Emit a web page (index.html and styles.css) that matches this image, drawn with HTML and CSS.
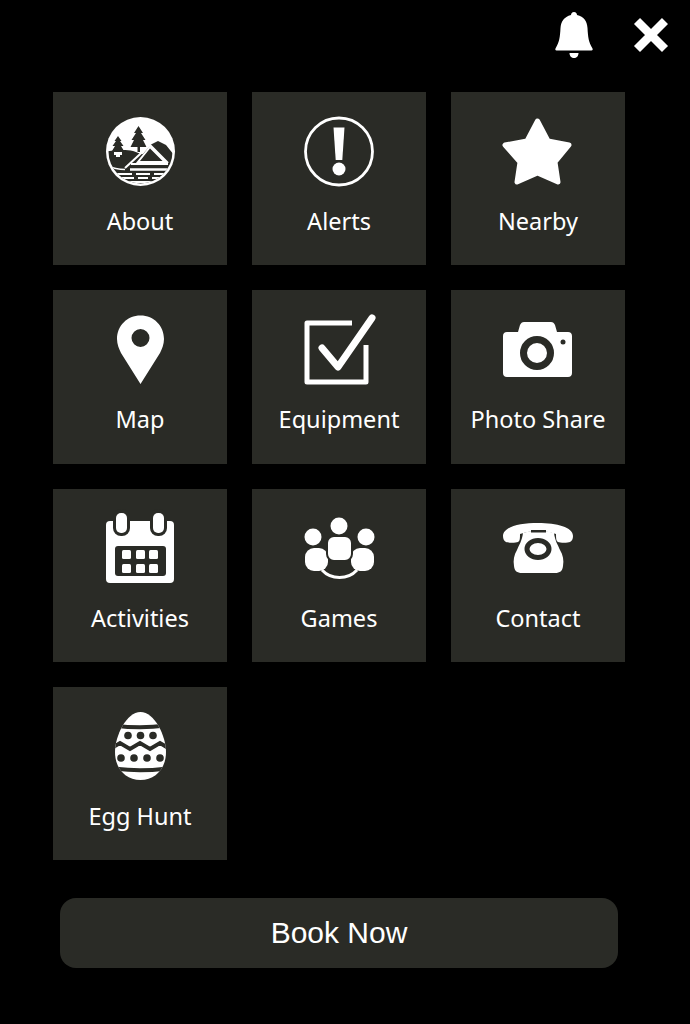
FILE: index.html
```html
<!DOCTYPE html>
<html>
<head>
    <title>Menu</title>
    <meta name="viewport" content="width=device-width, initial-scale=1.0">
    <link rel="stylesheet" href="styles.css">
</head>
<body>
    <div id="topbar">
      <svg class="bell-icon" viewBox="0 0 40 48">
        <path d="M20 1c2 0 3 1.500 3 3 7 1.500 10 6 10.500 13 .5 9 1 14 5 20.500.5 1 0 2-1 2H2.500c-1 0-1.500-1-1-2 4-6.500 4.500-11.500 5-20.500C7 10.500 10 6 17 4c0-1.500 1-3 3-3z" fill="#fff"/>
        <path d="M15.500 42h9c0 3-2 5-4.500 5s-4.500-2-4.500-5z" fill="#fff"/>
      </svg>
      <svg class="close-icon" viewBox="0 0 38 38">
        <path d="M5 5l28 28M33 5L5 33" stroke="#fff" stroke-width="8.500" fill="none"/>
      </svg>
    </div>

    <div id="menu">
      <a class="tile">
        <svg class="icon" viewBox="0 0 80 80">
          <clipPath id="inside"><circle cx="40.500" cy="41.500" r="32"/></clipPath>
          <circle cx="40.500" cy="41.500" r="34.500" fill="#fff"/>
          <g clip-path="url(#inside)">
            <path d="M5 42c8-2 20-3 28-1 4 1 7 3 10 3l7-9 8-4 8 4 8 10v32H5z" fill="#2a2b26"/>
            <path d="M18 26l3.500 5H20l3.500 5H21l3 5H12l3-5h-2.500l3.500-5h-1.500z" fill="#2a2b26"/>
            <path d="M38.500 16l4.500 7h-2l4.500 7H43l3.500 7h-16l3.500-7h-2.500l4.500-7h-2z" fill="#2a2b26"/>
            <rect x="37.500" y="37" width="2.500" height="5" fill="#2a2b26"/>
            <path d="M14 42h8v3h-2v2h-4v-2h-2z" fill="#fff"/>
            <path d="M25 58l25-23 18 18" fill="none" stroke="#fff" stroke-width="2"/>
            <path d="M50 37L38 52h27z" fill="#2a2b26" stroke="#fff" stroke-width="2"/>
            <path d="M31 54h37" stroke="#fff" stroke-width="2"/>
            <path d="M30 59.500h38" stroke="#fff" stroke-width="2.500"/>
            <path d="M8 56c6 3 12 3.500 17 3.500" fill="none" stroke="#fff" stroke-width="1.500"/>
            <path d="M14 64h18M36 64h14M54 64h16M20 68h14M38 68h10M52 68h12M26 72h28" stroke="#fff" stroke-width="1.800"/>
          </g>
        </svg>
        <span class="label">About</span>
      </a>
      <a class="tile">
        <svg class="icon" viewBox="0 0 80 80">
          <circle cx="40" cy="41.500" r="33.500" fill="none" stroke="#fff" stroke-width="2.800"/>
          <path d="M34.500 17.500h11L43.300 50h-6.600z" fill="#fff"/>
          <circle cx="40" cy="59" r="6.500" fill="#fff"/>
        </svg>
        <span class="label">Alerts</span>
      </a>
      <a class="tile">
        <svg class="icon" viewBox="0 0 80 80">
          <path d="M39.500 11L50 31l21 4-14 17 3 20-20.500-9L19 72l3-20L7 35l22-4z" fill="#fff" stroke="#fff" stroke-width="5" stroke-linejoin="round"/>
        </svg>
        <span class="label">Nearby</span>
      </a>

      <a class="tile">
        <svg class="icon" viewBox="0 0 80 80">
          <path fill-rule="evenodd" d="M40.500 7.500C54 7.500 64 18 64 31c0 5-2 10-4 14L40.500 76 21 45c-2-4-4-9-4-14C17 18 27 7.500 40.500 7.500zm0 13.500a9 9 0 1 0 0 18 9 9 0 0 0 0-18z" fill="#fff"/>
        </svg>
        <span class="label">Map</span>
      </a>
      <a class="tile">
        <svg class="icon" viewBox="0 0 80 80">
          <path d="M53 15H8v59h59V37" fill="none" stroke="#fff" stroke-width="5" stroke-linejoin="round"/>
          <path d="M23 40l16 19L73 10" fill="none" stroke="#fff" stroke-width="7" stroke-linecap="round" stroke-linejoin="round"/>
        </svg>
        <span class="label">Equipment</span>
      </a>
      <a class="tile">
        <svg class="icon" viewBox="0 0 80 80">
          <path d="M26 14h27c2 0 3 1 4 3l2 7h11c2.500 0 4 1.500 4 4v37c0 2.500-1.500 4-4 4H9c-2.500 0-4-1.500-4-4V28c0-2.500 1.500-4 4-4h11l2-7c1-2 2-3 4-3z" fill="#fff"/>
          <circle cx="39" cy="45" r="13.500" fill="#fff" stroke="#2a2b26" stroke-width="7"/>
          <circle cx="65" cy="34" r="2.500" fill="#2a2b26"/>
        </svg>
        <span class="label">Photo Share</span>
      </a>

      <a class="tile">
        <svg class="icon" viewBox="0 0 80 80">
          <rect x="6" y="14" width="68" height="62" rx="4" fill="#fff"/>
          <rect x="13" y="2" width="17" height="27" rx="8" fill="#2a2b26"/>
          <rect x="50" y="2" width="17" height="27" rx="8" fill="#2a2b26"/>
          <rect x="16" y="6" width="11" height="20" rx="5" fill="#fff"/>
          <rect x="53" y="6" width="11" height="20" rx="5" fill="#fff"/>
          <rect x="15" y="39" width="51" height="30" rx="3" fill="#2a2b26"/>
          <g fill="#fff">
            <rect x="22" y="43" width="9" height="9" rx="1.500"/>
            <rect x="36" y="43" width="9" height="9" rx="1.500"/>
            <rect x="49" y="43" width="9" height="9" rx="1.500"/>
            <rect x="22" y="57" width="9" height="9" rx="1.500"/>
            <rect x="36" y="57" width="9" height="9" rx="1.500"/>
            <rect x="49" y="57" width="9" height="9" rx="1.500"/>
          </g>
        </svg>
        <span class="label">Activities</span>
      </a>
      <a class="tile">
        <svg class="icon" viewBox="0 0 80 80">
          <g fill="#fff">
            <circle cx="40" cy="19" r="8.500"/>
            <circle cx="14" cy="30" r="8.500"/>
            <circle cx="67" cy="30" r="8.500"/>
            <rect x="6" y="41" width="23" height="23" rx="9"/>
            <rect x="52" y="41" width="23" height="23" rx="9"/>
            <rect x="28" y="29" width="25" height="25" rx="7" stroke="#2a2b26" stroke-width="2"/>
          </g>
          <path d="M23 63c9 10 26 10 35 0" fill="none" stroke="#fff" stroke-width="3"/>
        </svg>
        <span class="label">Games</span>
      </a>
      <a class="tile">
        <svg class="icon" viewBox="0 0 80 80">
          <path d="M5 29c0-9 16-13 35-13s35 4 35 13c0 3-1 5-3 6-2 1-10 1-12 0-2-1-2-4-2-8-6-2-12-3-18-3s-12 1-18 3c0 4 0 7-2 8-2 1-10 1-12 0-2-1-3-3-3-6z" fill="#fff"/>
          <path d="M25 26c10-3 21-3 31 0 1 8 4 12 6 17 3 5 4 10 3 16-.5 5-3 7-8 7H24c-5 0-7.500-2-8-7-1-6 0-11 3-16 2-5 5-9 6-17z" fill="#fff"/>
          <rect x="33" y="23" width="15" height="2.500" fill="#2a2b26"/>
          <ellipse cx="40" cy="42" rx="11" ry="8.500" fill="#fff" stroke="#2a2b26" stroke-width="5"/>
        </svg>
        <span class="label">Contact</span>
      </a>

      <a class="tile">
        <svg class="icon" viewBox="0 0 80 80">
          <clipPath id="egg"><path d="M40.500 7c14 0 25.500 24 25.500 40 0 17-11 28-25.500 28S15 64 15 47C15 31 26.500 7 40.500 7z"/></clipPath>
          <g clip-path="url(#egg)">
            <rect x="10" y="0" width="60" height="80" fill="#fff"/>
            <path d="M10 20c20 3 40 3 60 0" fill="none" stroke="#2a2b26" stroke-width="4"/>
            <path d="M10 44l10-6 10 6 10-6 10 6 10-6 10 6" fill="none" stroke="#2a2b26" stroke-width="4"/>
            <path d="M10 63c20 3 40 3 60 0" fill="none" stroke="#2a2b26" stroke-width="4"/>
          </g>
          <g fill="#2a2b26">
            <circle cx="28" cy="30.500" r="3.800"/>
            <circle cx="40.500" cy="30.500" r="3.800"/>
            <circle cx="53" cy="30.500" r="3.800"/>
            <circle cx="21" cy="53" r="3.800"/>
            <circle cx="34" cy="53" r="3.800"/>
            <circle cx="47" cy="53" r="3.800"/>
            <circle cx="60" cy="53" r="3.800"/>
          </g>
        </svg>
        <span class="label">Egg Hunt</span>
      </a>
    </div>

    <a id="book-now">Book Now</a>
</body>
</html>
```

FILE: styles.css
```css
body {
    font-family: "Noto Sans", Arial, sans-serif;
    margin: 0;
    padding: 0;
    background: #000;
    color: #fff;
}
#topbar {
    display: flex;
    justify-content: flex-end;
    align-items: center;
    gap: 38px;
    height: 70px;
    padding-right: 20px;
    margin-bottom: 22px;
}
.bell-icon {
    width: 40px;
    height: 48px;
}
.close-icon {
    width: 38px;
    height: 38px;
}
#menu {
    display: grid;
    grid-template-columns: repeat(3, 174px);
    grid-auto-rows: 173.33px;
    gap: 25px;
    margin-left: 53px;
}
.tile {
    display: flex;
    flex-direction: column;
    align-items: center;
    padding-top: 18px;
    box-sizing: border-box;
    background-color: #2a2b26;
}
.icon {
    width: 80px;
    height: 80px;
    flex: none;
}
.label {
    margin-top: 16px;
    font-size: 23.5px;
    line-height: 30px;
    white-space: nowrap;
}
#book-now {
    display: block;
    width: 558px;
    height: 70px;
    margin: 38px 0 0 60px;
    background-color: #2a2b26;
    border-radius: 16px;
    font-family: "Liberation Sans", Arial, sans-serif;
    font-size: 30px;
    line-height: 70px;
    text-align: center;
}
```
